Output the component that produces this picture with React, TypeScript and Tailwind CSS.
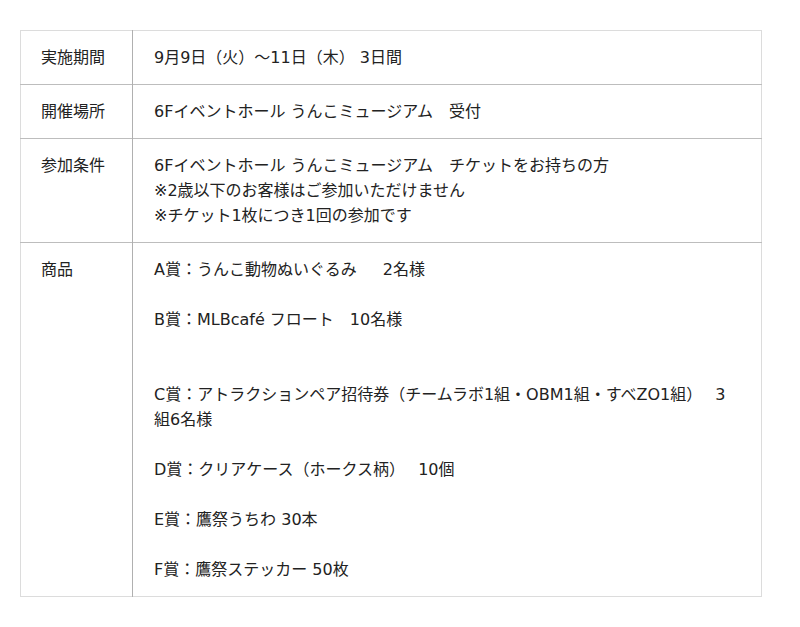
const FONT = "font-['DejaVu_Sans','Noto_Sans_CJK_JP',sans-serif]";

type Row = { label: string; lines: string[] };

const ROWS: Row[] = [
  { label: "実施期間", lines: ["9月9日（火）〜11日（木） 3日間"] },
  { label: "開催場所", lines: ["6Fイベントホール うんこミュージアム　受付"] },
  {
    label: "参加条件",
    lines: [
      "6Fイベントホール うんこミュージアム　チケットをお持ちの方",
      "※2歳以下のお客様はご参加いただけません",
      "※チケット1枚につき1回の参加です",
    ],
  },
  {
    label: "商品",
    lines: [
      "A賞：うんこ動物ぬいぐるみ　\u00a0\u00a02名様",
      "",
      "B賞：MLBcafé フロート　10名様",
      "",
      "",
      "C賞：アトラクションペア招待券（チームラボ1組・OBM1組・すべZO1組）　 3組6名様",
      "",
      "D賞：クリアケース（ホークス柄）　 10個",
      "",
      "E賞：鷹祭うちわ 30本",
      "",
      "F賞：鷹祭ステッカー 50枚",
    ],
  },
];

export default function App() {
  return (
    <div className={`min-h-[627px] bg-white px-5 pt-[30px] text-[16px] leading-[25px] text-[#222] ${FONT}`}>
      <table className="w-[742px] border-collapse border border-[#dcdcdc]">
        <tbody>
          {ROWS.map((row, i) => (
            <tr key={row.label} className={i > 0 ? "border-t border-[#bdbdbd]" : ""}>
              <td className="w-[112px] border-r border-[#b0b0b0] px-5 py-[14px] align-top">
                {row.label}
              </td>
              <td className="py-[14px] pl-[21px] pr-7 align-top">
                {row.lines.map((l, idx) => (
                  <div key={idx} className="min-h-[25px]">
                    {l}
                  </div>
                ))}
              </td>
            </tr>
          ))}
        </tbody>
      </table>
    </div>
  );
}
